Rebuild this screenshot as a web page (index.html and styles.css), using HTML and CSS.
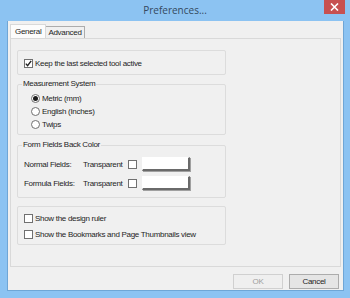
FILE: index.html
```html
<!DOCTYPE html>
<html lang="en">
<head>
    <meta charset="UTF-8">
    <title>Preferences...</title>
    <link rel="stylesheet" href="styles.css">
</head>
<body>

<div class="window">
    <div class="titlebar">
        <span class="title">Preferences...</span>
        <div class="close-btn">
            <svg width="9" height="8" viewBox="0 0 9 8"><path d="M1 0.5 L8 7.5 M8 0.5 L1 7.5" stroke="#fff" stroke-width="1.6"/></svg>
        </div>
    </div>

    <div class="client">
        <div class="tabs">
            <div class="tab active">General</div>
            <div class="tab">Advanced</div>
        </div>

        <div class="tab-page">
            <div class="group group-keep">
                <label class="check-row">
                    <span class="check checked">
                        <svg width="7" height="7" viewBox="0 0 7 7"><path d="M0.8 3.6 L2.6 5.6 L6.2 0.8" stroke="#222" stroke-width="1.4" fill="none"/></svg>
                    </span>
                    Keep the last selected tool active
                </label>
            </div>

            <fieldset class="group group-units">
                <legend>Measurement System</legend>
                <div class="radio-list">
                    <label class="radio-row"><span class="radio on"></span>Metric (mm)</label>
                    <label class="radio-row"><span class="radio"></span>English (Inches)</label>
                    <label class="radio-row"><span class="radio"></span>Twips</label>
                </div>
            </fieldset>

            <fieldset class="group group-colors">
                <legend>Form Fields Back Color</legend>
                <div class="color-list">
                    <div class="color-row">
                        <span class="field-name">Normal Fields:</span>
                        <span class="transp">Transparent</span>
                        <span class="check"></span>
                        <span class="swatch"></span>
                    </div>
                    <div class="color-row">
                        <span class="field-name">Formula Fields:</span>
                        <span class="transp">Transparent</span>
                        <span class="check"></span>
                        <span class="swatch"></span>
                    </div>
                </div>
            </fieldset>

            <div class="group group-view">
                <label class="check-row"><span class="check"></span>Show the design ruler</label>
                <label class="check-row"><span class="check"></span>Show the Bookmarks and Page Thumbnails view</label>
            </div>
        </div>

        <div class="buttons">
            <button class="btn" disabled>OK</button>
            <button class="btn">Cancel</button>
        </div>
    </div>
</div>

</body>
</html>
```

FILE: styles.css
```css
body {
    margin: 0;
    font-family: "Liberation Sans", Arial, sans-serif;
    font-size: 8px;
    letter-spacing: -0.3px;
    color: #1e1e1e;
    white-space: nowrap;
}

.window {
    width: 350px;
    height: 298px;
    background-color: #8cc3f2;
    display: flex;
    flex-direction: column;
    box-sizing: border-box;
}

.titlebar {
    height: 21px;
    display: flex;
    justify-content: center;
    align-items: center;
    position: relative;
}

.title {
    font-family: "Open Sans", sans-serif;
    font-size: 10px;
    letter-spacing: 0;
    color: #34495e;
    margin-top: -2px;
}

.close-btn {
    position: absolute;
    top: 0;
    right: 5px;
    width: 21px;
    height: 14px;
    background-color: #c75050;
    display: flex;
    justify-content: center;
    align-items: center;
}

.client {
    margin: 0 6px 7px 7px;
    height: 270px;
    background-color: #f0f0f0;
    border-left: 1px solid #6fa6d6;
    border-right: 1px solid #6fa6d6;
    border-bottom: 1px solid #6fa6d6;
    box-sizing: border-box;
    padding: 4px 2px 0 2px;
    display: flex;
    flex-direction: column;
}

.tabs {
    display: flex;
    align-items: flex-end;
    height: 13px;
}

.tab {
    border: 1px solid #acacac;
    border-bottom: none;
    padding: 0 2px;
    height: 11px;
    line-height: 11px;
    background-color: #f0f0f0;
}

.tab.active {
    height: 13px;
    line-height: 13px;
    background-color: #fcfcfc;
    border-color: #d9d9d9;
    padding: 0 4px;
    margin-right: -1px;
    position: relative;
    z-index: 1;
}

.tab-page {
    height: 229px;
    border: 1px solid #d9d9d9;
    background-color: #f0f0f0;
    box-sizing: border-box;
    padding: 11px 0 0 6px;
    display: flex;
    flex-direction: column;
    align-items: flex-start;
}

.group {
    width: 209px;
    box-sizing: border-box;
    border: 1px solid #dcdcdc;
    border-radius: 2px;
    margin: 0;
    min-width: 0;
}

.group-keep {
    height: 25px;
    padding: 7px 0 0 6px;
}

fieldset.group {
    padding: 0 0 0 5px;
}

.group-units {
    margin-top: 4px;
}

.group-colors {
    margin-top: 5px;
}

fieldset.group legend {
    padding: 0 1px;
    margin-left: -1px;
    line-height: 10px;
}

.check-row {
    display: flex;
    align-items: center;
    gap: 2px;
    height: 10px;
}

.check {
    width: 9px;
    height: 9px;
    box-sizing: border-box;
    border: 1px solid #707070;
    background-color: #fff;
    display: inline-flex;
    justify-content: center;
    align-items: center;
    flex-shrink: 0;
}

.radio-list {
    display: flex;
    flex-direction: column;
    gap: 3px;
    padding: 4px 0 5px 8px;
}

.radio-row {
    display: flex;
    align-items: center;
    gap: 2px;
    height: 10px;
}

.radio {
    width: 9px;
    height: 9px;
    box-sizing: border-box;
    border: 1px solid #707070;
    border-radius: 50%;
    background-color: #fff;
    display: inline-flex;
    justify-content: center;
    align-items: center;
}

.radio.on::after {
    content: "";
    width: 5px;
    height: 5px;
    border-radius: 50%;
    background-color: #1a1a1a;
}

.color-list {
    display: flex;
    flex-direction: column;
    gap: 5px;
    padding: 7px 0 7px 1px;
}

.color-row {
    display: flex;
    align-items: center;
    height: 14px;
}

.field-name {
    width: 59px;
}

.transp {
    width: 45px;
}

.swatch {
    width: 48px;
    height: 14px;
    box-sizing: border-box;
    margin-left: 5px;
    background-color: #fff;
    border-top: 1px solid #fff;
    border-left: 1px solid #fff;
    border-right: 2px solid #6a6a6a;
    border-bottom: 2px solid #6a6a6a;
    box-shadow: 1px 1px 0 #a0a0a0;
}

.group-view {
    margin-top: 8px;
    height: 39px;
    padding: 6px 0 0 6px;
    display: flex;
    flex-direction: column;
    gap: 6px;
}

.buttons {
    display: flex;
    justify-content: flex-end;
    gap: 6px;
    padding: 7px 2px 0 0;
}

.btn {
    width: 50px;
    height: 15px;
    padding: 0;
    font-family: "Liberation Sans", Arial, sans-serif;
    font-size: 8px;
    letter-spacing: -0.3px;
    color: #1e1e1e;
    background-color: #e5e5e5;
    border: 1px solid #acacac;
}

.btn:disabled {
    color: #a0a0a0;
    background-color: #efefef;
    border-color: #d0d0d0;
}
```
